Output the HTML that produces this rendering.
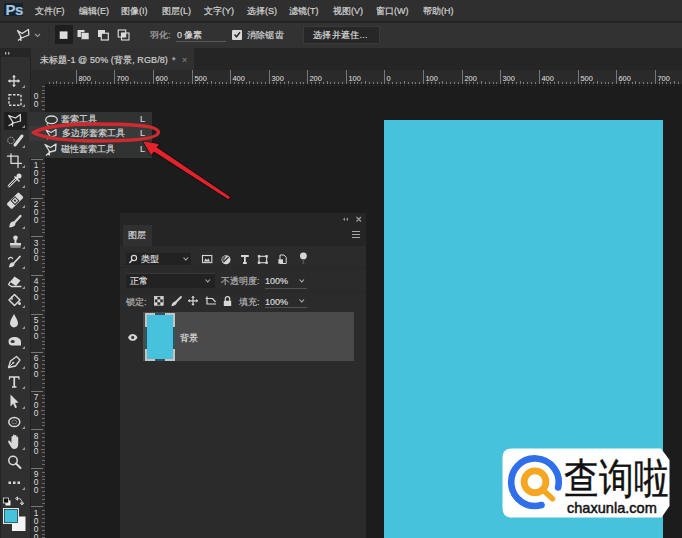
<!DOCTYPE html><html><head><meta charset="utf-8"><style>
*{margin:0;padding:0;box-sizing:border-box}
html,body{width:682px;height:538px;overflow:hidden;background:#1c1c1c;font-family:"Liberation Sans",sans-serif;color:#cfcfcf}
.a{position:absolute;white-space:nowrap;-webkit-text-stroke:0.2px currentColor}
svg{position:absolute;left:0;top:0;overflow:visible}
</style></head><body>
<div class="a" style="left:0px;top:0px;width:682px;height:21px;background:#2f2f2f;"></div>
<div class="a" style="left:0px;top:21px;width:682px;height:2px;background:#232323;"></div>
<div class="a" style="left:0px;top:23px;width:682px;height:25px;background:#323232;"></div>
<div class="a" style="left:0px;top:48px;width:682px;height:22px;background:#252525;"></div>
<div class="a" style="left:31px;top:48px;width:163px;height:22px;background:#303030;"></div>
<div class="a" style="left:0px;top:48px;width:30px;height:490px;background:#303030;"></div>
<div class="a" style="left:0px;top:48px;width:1px;height:490px;background:#242424;"></div>
<div class="a" style="left:0px;top:48px;width:31px;height:9px;background:#262626;"></div>
<div class="a" style="left:30px;top:57px;width:1px;height:481px;background:#222222;"></div>
<div class="a" style="left:31px;top:70px;width:651px;height:14px;background:#2a2a2a;"></div>
<div class="a" style="left:31px;top:70px;width:14px;height:468px;background:#2a2a2a;"></div>
<div class="a" style="left:45px;top:84px;width:637px;height:454px;background:#1c1c1c;"></div>
<svg width="682" height="538"><rect x="76" y="70" width="1" height="14" fill="#777"/><text x="78.5" y="80.6" font-size="7.4" fill="#e0e0e0" font-family="Liberation Sans">800</text><rect x="114" y="70" width="1" height="14" fill="#777"/><text x="116.5" y="80.6" font-size="7.4" fill="#e0e0e0" font-family="Liberation Sans">700</text><rect x="153" y="70" width="1" height="14" fill="#777"/><text x="155.5" y="80.6" font-size="7.4" fill="#e0e0e0" font-family="Liberation Sans">600</text><rect x="192" y="70" width="1" height="14" fill="#777"/><text x="194.5" y="80.6" font-size="7.4" fill="#e0e0e0" font-family="Liberation Sans">500</text><rect x="230" y="70" width="1" height="14" fill="#777"/><text x="232.5" y="80.6" font-size="7.4" fill="#e0e0e0" font-family="Liberation Sans">400</text><rect x="269" y="70" width="1" height="14" fill="#777"/><text x="271.5" y="80.6" font-size="7.4" fill="#e0e0e0" font-family="Liberation Sans">300</text><rect x="307" y="70" width="1" height="14" fill="#777"/><text x="309.5" y="80.6" font-size="7.4" fill="#e0e0e0" font-family="Liberation Sans">200</text><rect x="346" y="70" width="1" height="14" fill="#777"/><text x="348.5" y="80.6" font-size="7.4" fill="#e0e0e0" font-family="Liberation Sans">100</text><rect x="384" y="70" width="1" height="14" fill="#777"/><text x="386.5" y="80.6" font-size="7.4" fill="#e0e0e0" font-family="Liberation Sans">0</text><rect x="423" y="70" width="1" height="14" fill="#777"/><text x="425.5" y="80.6" font-size="7.4" fill="#e0e0e0" font-family="Liberation Sans">100</text><rect x="462" y="70" width="1" height="14" fill="#777"/><text x="464.5" y="80.6" font-size="7.4" fill="#e0e0e0" font-family="Liberation Sans">200</text><rect x="500" y="70" width="1" height="14" fill="#777"/><text x="502.5" y="80.6" font-size="7.4" fill="#e0e0e0" font-family="Liberation Sans">300</text><rect x="539" y="70" width="1" height="14" fill="#777"/><text x="541.5" y="80.6" font-size="7.4" fill="#e0e0e0" font-family="Liberation Sans">400</text><rect x="578" y="70" width="1" height="14" fill="#777"/><text x="580.5" y="80.6" font-size="7.4" fill="#e0e0e0" font-family="Liberation Sans">500</text><rect x="616" y="70" width="1" height="14" fill="#777"/><text x="618.5" y="80.6" font-size="7.4" fill="#e0e0e0" font-family="Liberation Sans">600</text><rect x="655" y="70" width="1" height="14" fill="#777"/><text x="657.5" y="80.6" font-size="7.4" fill="#e0e0e0" font-family="Liberation Sans">700</text><rect x="49" y="82" width="1" height="2" fill="#7a7a7a"/><rect x="49" y="85" width="1" height="1" fill="#3a3a3a"/><rect x="53" y="82" width="1" height="2" fill="#7a7a7a"/><rect x="53" y="85" width="1" height="1" fill="#3a3a3a"/><rect x="56" y="81" width="1" height="3" fill="#7a7a7a"/><rect x="56" y="85" width="1" height="1" fill="#3a3a3a"/><rect x="60" y="82" width="1" height="2" fill="#7a7a7a"/><rect x="60" y="85" width="1" height="1" fill="#3a3a3a"/><rect x="64" y="82" width="1" height="2" fill="#7a7a7a"/><rect x="64" y="85" width="1" height="1" fill="#3a3a3a"/><rect x="68" y="82" width="1" height="2" fill="#7a7a7a"/><rect x="68" y="85" width="1" height="1" fill="#3a3a3a"/><rect x="72" y="82" width="1" height="2" fill="#7a7a7a"/><rect x="72" y="85" width="1" height="1" fill="#3a3a3a"/><rect x="80" y="82" width="1" height="2" fill="#7a7a7a"/><rect x="80" y="85" width="1" height="1" fill="#3a3a3a"/><rect x="83" y="82" width="1" height="2" fill="#7a7a7a"/><rect x="83" y="85" width="1" height="1" fill="#3a3a3a"/><rect x="87" y="82" width="1" height="2" fill="#7a7a7a"/><rect x="87" y="85" width="1" height="1" fill="#3a3a3a"/><rect x="91" y="82" width="1" height="2" fill="#7a7a7a"/><rect x="91" y="85" width="1" height="1" fill="#3a3a3a"/><rect x="95" y="81" width="1" height="3" fill="#7a7a7a"/><rect x="95" y="85" width="1" height="1" fill="#3a3a3a"/><rect x="99" y="82" width="1" height="2" fill="#7a7a7a"/><rect x="99" y="85" width="1" height="1" fill="#3a3a3a"/><rect x="103" y="82" width="1" height="2" fill="#7a7a7a"/><rect x="103" y="85" width="1" height="1" fill="#3a3a3a"/><rect x="107" y="82" width="1" height="2" fill="#7a7a7a"/><rect x="107" y="85" width="1" height="1" fill="#3a3a3a"/><rect x="110" y="82" width="1" height="2" fill="#7a7a7a"/><rect x="110" y="85" width="1" height="1" fill="#3a3a3a"/><rect x="118" y="82" width="1" height="2" fill="#7a7a7a"/><rect x="118" y="85" width="1" height="1" fill="#3a3a3a"/><rect x="122" y="82" width="1" height="2" fill="#7a7a7a"/><rect x="122" y="85" width="1" height="1" fill="#3a3a3a"/><rect x="126" y="82" width="1" height="2" fill="#7a7a7a"/><rect x="126" y="85" width="1" height="1" fill="#3a3a3a"/><rect x="130" y="82" width="1" height="2" fill="#7a7a7a"/><rect x="130" y="85" width="1" height="1" fill="#3a3a3a"/><rect x="134" y="81" width="1" height="3" fill="#7a7a7a"/><rect x="134" y="85" width="1" height="1" fill="#3a3a3a"/><rect x="137" y="82" width="1" height="2" fill="#7a7a7a"/><rect x="137" y="85" width="1" height="1" fill="#3a3a3a"/><rect x="141" y="82" width="1" height="2" fill="#7a7a7a"/><rect x="141" y="85" width="1" height="1" fill="#3a3a3a"/><rect x="145" y="82" width="1" height="2" fill="#7a7a7a"/><rect x="145" y="85" width="1" height="1" fill="#3a3a3a"/><rect x="149" y="82" width="1" height="2" fill="#7a7a7a"/><rect x="149" y="85" width="1" height="1" fill="#3a3a3a"/><rect x="157" y="82" width="1" height="2" fill="#7a7a7a"/><rect x="157" y="85" width="1" height="1" fill="#3a3a3a"/><rect x="161" y="82" width="1" height="2" fill="#7a7a7a"/><rect x="161" y="85" width="1" height="1" fill="#3a3a3a"/><rect x="164" y="82" width="1" height="2" fill="#7a7a7a"/><rect x="164" y="85" width="1" height="1" fill="#3a3a3a"/><rect x="168" y="82" width="1" height="2" fill="#7a7a7a"/><rect x="168" y="85" width="1" height="1" fill="#3a3a3a"/><rect x="172" y="81" width="1" height="3" fill="#7a7a7a"/><rect x="172" y="85" width="1" height="1" fill="#3a3a3a"/><rect x="176" y="82" width="1" height="2" fill="#7a7a7a"/><rect x="176" y="85" width="1" height="1" fill="#3a3a3a"/><rect x="180" y="82" width="1" height="2" fill="#7a7a7a"/><rect x="180" y="85" width="1" height="1" fill="#3a3a3a"/><rect x="184" y="82" width="1" height="2" fill="#7a7a7a"/><rect x="184" y="85" width="1" height="1" fill="#3a3a3a"/><rect x="188" y="82" width="1" height="2" fill="#7a7a7a"/><rect x="188" y="85" width="1" height="1" fill="#3a3a3a"/><rect x="195" y="82" width="1" height="2" fill="#7a7a7a"/><rect x="195" y="85" width="1" height="1" fill="#3a3a3a"/><rect x="199" y="82" width="1" height="2" fill="#7a7a7a"/><rect x="199" y="85" width="1" height="1" fill="#3a3a3a"/><rect x="203" y="82" width="1" height="2" fill="#7a7a7a"/><rect x="203" y="85" width="1" height="1" fill="#3a3a3a"/><rect x="207" y="82" width="1" height="2" fill="#7a7a7a"/><rect x="207" y="85" width="1" height="1" fill="#3a3a3a"/><rect x="211" y="81" width="1" height="3" fill="#7a7a7a"/><rect x="211" y="85" width="1" height="1" fill="#3a3a3a"/><rect x="215" y="82" width="1" height="2" fill="#7a7a7a"/><rect x="215" y="85" width="1" height="1" fill="#3a3a3a"/><rect x="219" y="82" width="1" height="2" fill="#7a7a7a"/><rect x="219" y="85" width="1" height="1" fill="#3a3a3a"/><rect x="222" y="82" width="1" height="2" fill="#7a7a7a"/><rect x="222" y="85" width="1" height="1" fill="#3a3a3a"/><rect x="226" y="82" width="1" height="2" fill="#7a7a7a"/><rect x="226" y="85" width="1" height="1" fill="#3a3a3a"/><rect x="234" y="82" width="1" height="2" fill="#7a7a7a"/><rect x="234" y="85" width="1" height="1" fill="#3a3a3a"/><rect x="238" y="82" width="1" height="2" fill="#7a7a7a"/><rect x="238" y="85" width="1" height="1" fill="#3a3a3a"/><rect x="242" y="82" width="1" height="2" fill="#7a7a7a"/><rect x="242" y="85" width="1" height="1" fill="#3a3a3a"/><rect x="246" y="82" width="1" height="2" fill="#7a7a7a"/><rect x="246" y="85" width="1" height="1" fill="#3a3a3a"/><rect x="249" y="81" width="1" height="3" fill="#7a7a7a"/><rect x="249" y="85" width="1" height="1" fill="#3a3a3a"/><rect x="253" y="82" width="1" height="2" fill="#7a7a7a"/><rect x="253" y="85" width="1" height="1" fill="#3a3a3a"/><rect x="257" y="82" width="1" height="2" fill="#7a7a7a"/><rect x="257" y="85" width="1" height="1" fill="#3a3a3a"/><rect x="261" y="82" width="1" height="2" fill="#7a7a7a"/><rect x="261" y="85" width="1" height="1" fill="#3a3a3a"/><rect x="265" y="82" width="1" height="2" fill="#7a7a7a"/><rect x="265" y="85" width="1" height="1" fill="#3a3a3a"/><rect x="273" y="82" width="1" height="2" fill="#7a7a7a"/><rect x="273" y="85" width="1" height="1" fill="#3a3a3a"/><rect x="276" y="82" width="1" height="2" fill="#7a7a7a"/><rect x="276" y="85" width="1" height="1" fill="#3a3a3a"/><rect x="280" y="82" width="1" height="2" fill="#7a7a7a"/><rect x="280" y="85" width="1" height="1" fill="#3a3a3a"/><rect x="284" y="82" width="1" height="2" fill="#7a7a7a"/><rect x="284" y="85" width="1" height="1" fill="#3a3a3a"/><rect x="288" y="81" width="1" height="3" fill="#7a7a7a"/><rect x="288" y="85" width="1" height="1" fill="#3a3a3a"/><rect x="292" y="82" width="1" height="2" fill="#7a7a7a"/><rect x="292" y="85" width="1" height="1" fill="#3a3a3a"/><rect x="296" y="82" width="1" height="2" fill="#7a7a7a"/><rect x="296" y="85" width="1" height="1" fill="#3a3a3a"/><rect x="300" y="82" width="1" height="2" fill="#7a7a7a"/><rect x="300" y="85" width="1" height="1" fill="#3a3a3a"/><rect x="303" y="82" width="1" height="2" fill="#7a7a7a"/><rect x="303" y="85" width="1" height="1" fill="#3a3a3a"/><rect x="311" y="82" width="1" height="2" fill="#7a7a7a"/><rect x="311" y="85" width="1" height="1" fill="#3a3a3a"/><rect x="315" y="82" width="1" height="2" fill="#7a7a7a"/><rect x="315" y="85" width="1" height="1" fill="#3a3a3a"/><rect x="319" y="82" width="1" height="2" fill="#7a7a7a"/><rect x="319" y="85" width="1" height="1" fill="#3a3a3a"/><rect x="323" y="82" width="1" height="2" fill="#7a7a7a"/><rect x="323" y="85" width="1" height="1" fill="#3a3a3a"/><rect x="327" y="81" width="1" height="3" fill="#7a7a7a"/><rect x="327" y="85" width="1" height="1" fill="#3a3a3a"/><rect x="330" y="82" width="1" height="2" fill="#7a7a7a"/><rect x="330" y="85" width="1" height="1" fill="#3a3a3a"/><rect x="334" y="82" width="1" height="2" fill="#7a7a7a"/><rect x="334" y="85" width="1" height="1" fill="#3a3a3a"/><rect x="338" y="82" width="1" height="2" fill="#7a7a7a"/><rect x="338" y="85" width="1" height="1" fill="#3a3a3a"/><rect x="342" y="82" width="1" height="2" fill="#7a7a7a"/><rect x="342" y="85" width="1" height="1" fill="#3a3a3a"/><rect x="350" y="82" width="1" height="2" fill="#7a7a7a"/><rect x="350" y="85" width="1" height="1" fill="#3a3a3a"/><rect x="354" y="82" width="1" height="2" fill="#7a7a7a"/><rect x="354" y="85" width="1" height="1" fill="#3a3a3a"/><rect x="357" y="82" width="1" height="2" fill="#7a7a7a"/><rect x="357" y="85" width="1" height="1" fill="#3a3a3a"/><rect x="361" y="82" width="1" height="2" fill="#7a7a7a"/><rect x="361" y="85" width="1" height="1" fill="#3a3a3a"/><rect x="365" y="81" width="1" height="3" fill="#7a7a7a"/><rect x="365" y="85" width="1" height="1" fill="#3a3a3a"/><rect x="369" y="82" width="1" height="2" fill="#7a7a7a"/><rect x="369" y="85" width="1" height="1" fill="#3a3a3a"/><rect x="373" y="82" width="1" height="2" fill="#7a7a7a"/><rect x="373" y="85" width="1" height="1" fill="#3a3a3a"/><rect x="377" y="82" width="1" height="2" fill="#7a7a7a"/><rect x="377" y="85" width="1" height="1" fill="#3a3a3a"/><rect x="381" y="82" width="1" height="2" fill="#7a7a7a"/><rect x="381" y="85" width="1" height="1" fill="#3a3a3a"/><rect x="388" y="82" width="1" height="2" fill="#7a7a7a"/><rect x="388" y="85" width="1" height="1" fill="#3a3a3a"/><rect x="392" y="82" width="1" height="2" fill="#7a7a7a"/><rect x="392" y="85" width="1" height="1" fill="#3a3a3a"/><rect x="396" y="82" width="1" height="2" fill="#7a7a7a"/><rect x="396" y="85" width="1" height="1" fill="#3a3a3a"/><rect x="400" y="82" width="1" height="2" fill="#7a7a7a"/><rect x="400" y="85" width="1" height="1" fill="#3a3a3a"/><rect x="404" y="81" width="1" height="3" fill="#7a7a7a"/><rect x="404" y="85" width="1" height="1" fill="#3a3a3a"/><rect x="408" y="82" width="1" height="2" fill="#7a7a7a"/><rect x="408" y="85" width="1" height="1" fill="#3a3a3a"/><rect x="412" y="82" width="1" height="2" fill="#7a7a7a"/><rect x="412" y="85" width="1" height="1" fill="#3a3a3a"/><rect x="415" y="82" width="1" height="2" fill="#7a7a7a"/><rect x="415" y="85" width="1" height="1" fill="#3a3a3a"/><rect x="419" y="82" width="1" height="2" fill="#7a7a7a"/><rect x="419" y="85" width="1" height="1" fill="#3a3a3a"/><rect x="427" y="82" width="1" height="2" fill="#7a7a7a"/><rect x="427" y="85" width="1" height="1" fill="#3a3a3a"/><rect x="431" y="82" width="1" height="2" fill="#7a7a7a"/><rect x="431" y="85" width="1" height="1" fill="#3a3a3a"/><rect x="435" y="82" width="1" height="2" fill="#7a7a7a"/><rect x="435" y="85" width="1" height="1" fill="#3a3a3a"/><rect x="439" y="82" width="1" height="2" fill="#7a7a7a"/><rect x="439" y="85" width="1" height="1" fill="#3a3a3a"/><rect x="442" y="81" width="1" height="3" fill="#7a7a7a"/><rect x="442" y="85" width="1" height="1" fill="#3a3a3a"/><rect x="446" y="82" width="1" height="2" fill="#7a7a7a"/><rect x="446" y="85" width="1" height="1" fill="#3a3a3a"/><rect x="450" y="82" width="1" height="2" fill="#7a7a7a"/><rect x="450" y="85" width="1" height="1" fill="#3a3a3a"/><rect x="454" y="82" width="1" height="2" fill="#7a7a7a"/><rect x="454" y="85" width="1" height="1" fill="#3a3a3a"/><rect x="458" y="82" width="1" height="2" fill="#7a7a7a"/><rect x="458" y="85" width="1" height="1" fill="#3a3a3a"/><rect x="466" y="82" width="1" height="2" fill="#7a7a7a"/><rect x="466" y="85" width="1" height="1" fill="#3a3a3a"/><rect x="469" y="82" width="1" height="2" fill="#7a7a7a"/><rect x="469" y="85" width="1" height="1" fill="#3a3a3a"/><rect x="473" y="82" width="1" height="2" fill="#7a7a7a"/><rect x="473" y="85" width="1" height="1" fill="#3a3a3a"/><rect x="477" y="82" width="1" height="2" fill="#7a7a7a"/><rect x="477" y="85" width="1" height="1" fill="#3a3a3a"/><rect x="481" y="81" width="1" height="3" fill="#7a7a7a"/><rect x="481" y="85" width="1" height="1" fill="#3a3a3a"/><rect x="485" y="82" width="1" height="2" fill="#7a7a7a"/><rect x="485" y="85" width="1" height="1" fill="#3a3a3a"/><rect x="489" y="82" width="1" height="2" fill="#7a7a7a"/><rect x="489" y="85" width="1" height="1" fill="#3a3a3a"/><rect x="493" y="82" width="1" height="2" fill="#7a7a7a"/><rect x="493" y="85" width="1" height="1" fill="#3a3a3a"/><rect x="496" y="82" width="1" height="2" fill="#7a7a7a"/><rect x="496" y="85" width="1" height="1" fill="#3a3a3a"/><rect x="504" y="82" width="1" height="2" fill="#7a7a7a"/><rect x="504" y="85" width="1" height="1" fill="#3a3a3a"/><rect x="508" y="82" width="1" height="2" fill="#7a7a7a"/><rect x="508" y="85" width="1" height="1" fill="#3a3a3a"/><rect x="512" y="82" width="1" height="2" fill="#7a7a7a"/><rect x="512" y="85" width="1" height="1" fill="#3a3a3a"/><rect x="516" y="82" width="1" height="2" fill="#7a7a7a"/><rect x="516" y="85" width="1" height="1" fill="#3a3a3a"/><rect x="520" y="81" width="1" height="3" fill="#7a7a7a"/><rect x="520" y="85" width="1" height="1" fill="#3a3a3a"/><rect x="523" y="82" width="1" height="2" fill="#7a7a7a"/><rect x="523" y="85" width="1" height="1" fill="#3a3a3a"/><rect x="527" y="82" width="1" height="2" fill="#7a7a7a"/><rect x="527" y="85" width="1" height="1" fill="#3a3a3a"/><rect x="531" y="82" width="1" height="2" fill="#7a7a7a"/><rect x="531" y="85" width="1" height="1" fill="#3a3a3a"/><rect x="535" y="82" width="1" height="2" fill="#7a7a7a"/><rect x="535" y="85" width="1" height="1" fill="#3a3a3a"/><rect x="543" y="82" width="1" height="2" fill="#7a7a7a"/><rect x="543" y="85" width="1" height="1" fill="#3a3a3a"/><rect x="547" y="82" width="1" height="2" fill="#7a7a7a"/><rect x="547" y="85" width="1" height="1" fill="#3a3a3a"/><rect x="550" y="82" width="1" height="2" fill="#7a7a7a"/><rect x="550" y="85" width="1" height="1" fill="#3a3a3a"/><rect x="554" y="82" width="1" height="2" fill="#7a7a7a"/><rect x="554" y="85" width="1" height="1" fill="#3a3a3a"/><rect x="558" y="81" width="1" height="3" fill="#7a7a7a"/><rect x="558" y="85" width="1" height="1" fill="#3a3a3a"/><rect x="562" y="82" width="1" height="2" fill="#7a7a7a"/><rect x="562" y="85" width="1" height="1" fill="#3a3a3a"/><rect x="566" y="82" width="1" height="2" fill="#7a7a7a"/><rect x="566" y="85" width="1" height="1" fill="#3a3a3a"/><rect x="570" y="82" width="1" height="2" fill="#7a7a7a"/><rect x="570" y="85" width="1" height="1" fill="#3a3a3a"/><rect x="574" y="82" width="1" height="2" fill="#7a7a7a"/><rect x="574" y="85" width="1" height="1" fill="#3a3a3a"/><rect x="581" y="82" width="1" height="2" fill="#7a7a7a"/><rect x="581" y="85" width="1" height="1" fill="#3a3a3a"/><rect x="585" y="82" width="1" height="2" fill="#7a7a7a"/><rect x="585" y="85" width="1" height="1" fill="#3a3a3a"/><rect x="589" y="82" width="1" height="2" fill="#7a7a7a"/><rect x="589" y="85" width="1" height="1" fill="#3a3a3a"/><rect x="593" y="82" width="1" height="2" fill="#7a7a7a"/><rect x="593" y="85" width="1" height="1" fill="#3a3a3a"/><rect x="597" y="81" width="1" height="3" fill="#7a7a7a"/><rect x="597" y="85" width="1" height="1" fill="#3a3a3a"/><rect x="601" y="82" width="1" height="2" fill="#7a7a7a"/><rect x="601" y="85" width="1" height="1" fill="#3a3a3a"/><rect x="605" y="82" width="1" height="2" fill="#7a7a7a"/><rect x="605" y="85" width="1" height="1" fill="#3a3a3a"/><rect x="608" y="82" width="1" height="2" fill="#7a7a7a"/><rect x="608" y="85" width="1" height="1" fill="#3a3a3a"/><rect x="612" y="82" width="1" height="2" fill="#7a7a7a"/><rect x="612" y="85" width="1" height="1" fill="#3a3a3a"/><rect x="620" y="82" width="1" height="2" fill="#7a7a7a"/><rect x="620" y="85" width="1" height="1" fill="#3a3a3a"/><rect x="624" y="82" width="1" height="2" fill="#7a7a7a"/><rect x="624" y="85" width="1" height="1" fill="#3a3a3a"/><rect x="628" y="82" width="1" height="2" fill="#7a7a7a"/><rect x="628" y="85" width="1" height="1" fill="#3a3a3a"/><rect x="632" y="82" width="1" height="2" fill="#7a7a7a"/><rect x="632" y="85" width="1" height="1" fill="#3a3a3a"/><rect x="635" y="81" width="1" height="3" fill="#7a7a7a"/><rect x="635" y="85" width="1" height="1" fill="#3a3a3a"/><rect x="639" y="82" width="1" height="2" fill="#7a7a7a"/><rect x="639" y="85" width="1" height="1" fill="#3a3a3a"/><rect x="643" y="82" width="1" height="2" fill="#7a7a7a"/><rect x="643" y="85" width="1" height="1" fill="#3a3a3a"/><rect x="647" y="82" width="1" height="2" fill="#7a7a7a"/><rect x="647" y="85" width="1" height="1" fill="#3a3a3a"/><rect x="651" y="82" width="1" height="2" fill="#7a7a7a"/><rect x="651" y="85" width="1" height="1" fill="#3a3a3a"/><rect x="659" y="82" width="1" height="2" fill="#7a7a7a"/><rect x="659" y="85" width="1" height="1" fill="#3a3a3a"/><rect x="662" y="82" width="1" height="2" fill="#7a7a7a"/><rect x="662" y="85" width="1" height="1" fill="#3a3a3a"/><rect x="666" y="82" width="1" height="2" fill="#7a7a7a"/><rect x="666" y="85" width="1" height="1" fill="#3a3a3a"/><rect x="670" y="82" width="1" height="2" fill="#7a7a7a"/><rect x="670" y="85" width="1" height="1" fill="#3a3a3a"/><rect x="674" y="81" width="1" height="3" fill="#7a7a7a"/><rect x="674" y="85" width="1" height="1" fill="#3a3a3a"/><rect x="678" y="82" width="1" height="2" fill="#7a7a7a"/><rect x="678" y="85" width="1" height="1" fill="#3a3a3a"/><rect x="682" y="82" width="1" height="2" fill="#7a7a7a"/><rect x="682" y="85" width="1" height="1" fill="#3a3a3a"/><rect x="31" y="82" width="12" height="1" fill="#777"/><text x="33.8" y="99.1" font-size="8.4" fill="#dcdcdc" font-family="Liberation Sans">0</text><text x="33.8" y="107.0" font-size="8.4" fill="#dcdcdc" font-family="Liberation Sans">0</text><rect x="31" y="120" width="12" height="1" fill="#777"/><text x="33.8" y="129.8" font-size="8.4" fill="#dcdcdc" font-family="Liberation Sans">0</text><rect x="31" y="159" width="12" height="1" fill="#777"/><text x="33.8" y="168.4" font-size="8.4" fill="#dcdcdc" font-family="Liberation Sans">1</text><text x="33.8" y="176.3" font-size="8.4" fill="#dcdcdc" font-family="Liberation Sans">0</text><text x="33.8" y="184.2" font-size="8.4" fill="#dcdcdc" font-family="Liberation Sans">0</text><rect x="31" y="198" width="12" height="1" fill="#777"/><text x="33.8" y="207.0" font-size="8.4" fill="#dcdcdc" font-family="Liberation Sans">2</text><text x="33.8" y="214.9" font-size="8.4" fill="#dcdcdc" font-family="Liberation Sans">0</text><text x="33.8" y="222.8" font-size="8.4" fill="#dcdcdc" font-family="Liberation Sans">0</text><rect x="31" y="236" width="12" height="1" fill="#777"/><text x="33.8" y="245.6" font-size="8.4" fill="#dcdcdc" font-family="Liberation Sans">3</text><text x="33.8" y="253.5" font-size="8.4" fill="#dcdcdc" font-family="Liberation Sans">0</text><text x="33.8" y="261.4" font-size="8.4" fill="#dcdcdc" font-family="Liberation Sans">0</text><rect x="31" y="275" width="12" height="1" fill="#777"/><text x="33.8" y="284.2" font-size="8.4" fill="#dcdcdc" font-family="Liberation Sans">4</text><text x="33.8" y="292.1" font-size="8.4" fill="#dcdcdc" font-family="Liberation Sans">0</text><text x="33.8" y="300.0" font-size="8.4" fill="#dcdcdc" font-family="Liberation Sans">0</text><rect x="31" y="314" width="12" height="1" fill="#777"/><text x="33.8" y="322.8" font-size="8.4" fill="#dcdcdc" font-family="Liberation Sans">5</text><text x="33.8" y="330.7" font-size="8.4" fill="#dcdcdc" font-family="Liberation Sans">0</text><text x="33.8" y="338.6" font-size="8.4" fill="#dcdcdc" font-family="Liberation Sans">0</text><rect x="31" y="352" width="12" height="1" fill="#777"/><text x="33.8" y="361.4" font-size="8.4" fill="#dcdcdc" font-family="Liberation Sans">6</text><text x="33.8" y="369.3" font-size="8.4" fill="#dcdcdc" font-family="Liberation Sans">0</text><text x="33.8" y="377.2" font-size="8.4" fill="#dcdcdc" font-family="Liberation Sans">0</text><rect x="31" y="391" width="12" height="1" fill="#777"/><text x="33.8" y="400.0" font-size="8.4" fill="#dcdcdc" font-family="Liberation Sans">7</text><text x="33.8" y="407.9" font-size="8.4" fill="#dcdcdc" font-family="Liberation Sans">0</text><text x="33.8" y="415.8" font-size="8.4" fill="#dcdcdc" font-family="Liberation Sans">0</text><rect x="31" y="429" width="12" height="1" fill="#777"/><text x="33.8" y="438.6" font-size="8.4" fill="#dcdcdc" font-family="Liberation Sans">8</text><text x="33.8" y="446.5" font-size="8.4" fill="#dcdcdc" font-family="Liberation Sans">0</text><text x="33.8" y="454.4" font-size="8.4" fill="#dcdcdc" font-family="Liberation Sans">0</text><rect x="31" y="468" width="12" height="1" fill="#777"/><text x="33.8" y="477.2" font-size="8.4" fill="#dcdcdc" font-family="Liberation Sans">9</text><text x="33.8" y="485.1" font-size="8.4" fill="#dcdcdc" font-family="Liberation Sans">0</text><text x="33.8" y="493.0" font-size="8.4" fill="#dcdcdc" font-family="Liberation Sans">0</text><rect x="31" y="506" width="12" height="1" fill="#777"/><text x="33.8" y="515.8" font-size="8.4" fill="#dcdcdc" font-family="Liberation Sans">1</text><text x="33.8" y="523.7" font-size="8.4" fill="#dcdcdc" font-family="Liberation Sans">0</text><text x="33.8" y="531.6" font-size="8.4" fill="#dcdcdc" font-family="Liberation Sans">0</text><text x="33.8" y="539.5" font-size="8.4" fill="#dcdcdc" font-family="Liberation Sans">0</text><rect x="42" y="86" width="3" height="1" fill="#6a6a6a"/><rect x="42" y="90" width="3" height="1" fill="#6a6a6a"/><rect x="42" y="93" width="3" height="1" fill="#6a6a6a"/><rect x="42" y="97" width="3" height="1" fill="#6a6a6a"/><rect x="41" y="101" width="4" height="1" fill="#6a6a6a"/><rect x="42" y="105" width="3" height="1" fill="#6a6a6a"/><rect x="42" y="109" width="3" height="1" fill="#6a6a6a"/><rect x="42" y="113" width="3" height="1" fill="#6a6a6a"/><rect x="42" y="117" width="3" height="1" fill="#6a6a6a"/><rect x="42" y="124" width="3" height="1" fill="#6a6a6a"/><rect x="42" y="128" width="3" height="1" fill="#6a6a6a"/><rect x="42" y="132" width="3" height="1" fill="#6a6a6a"/><rect x="42" y="136" width="3" height="1" fill="#6a6a6a"/><rect x="41" y="140" width="4" height="1" fill="#6a6a6a"/><rect x="42" y="144" width="3" height="1" fill="#6a6a6a"/><rect x="42" y="148" width="3" height="1" fill="#6a6a6a"/><rect x="42" y="151" width="3" height="1" fill="#6a6a6a"/><rect x="42" y="155" width="3" height="1" fill="#6a6a6a"/><rect x="42" y="163" width="3" height="1" fill="#6a6a6a"/><rect x="42" y="167" width="3" height="1" fill="#6a6a6a"/><rect x="42" y="171" width="3" height="1" fill="#6a6a6a"/><rect x="42" y="175" width="3" height="1" fill="#6a6a6a"/><rect x="41" y="178" width="4" height="1" fill="#6a6a6a"/><rect x="42" y="182" width="3" height="1" fill="#6a6a6a"/><rect x="42" y="186" width="3" height="1" fill="#6a6a6a"/><rect x="42" y="190" width="3" height="1" fill="#6a6a6a"/><rect x="42" y="194" width="3" height="1" fill="#6a6a6a"/><rect x="42" y="202" width="3" height="1" fill="#6a6a6a"/><rect x="42" y="205" width="3" height="1" fill="#6a6a6a"/><rect x="42" y="209" width="3" height="1" fill="#6a6a6a"/><rect x="42" y="213" width="3" height="1" fill="#6a6a6a"/><rect x="41" y="217" width="4" height="1" fill="#6a6a6a"/><rect x="42" y="221" width="3" height="1" fill="#6a6a6a"/><rect x="42" y="225" width="3" height="1" fill="#6a6a6a"/><rect x="42" y="229" width="3" height="1" fill="#6a6a6a"/><rect x="42" y="232" width="3" height="1" fill="#6a6a6a"/><rect x="42" y="240" width="3" height="1" fill="#6a6a6a"/><rect x="42" y="244" width="3" height="1" fill="#6a6a6a"/><rect x="42" y="248" width="3" height="1" fill="#6a6a6a"/><rect x="42" y="252" width="3" height="1" fill="#6a6a6a"/><rect x="41" y="256" width="4" height="1" fill="#6a6a6a"/><rect x="42" y="259" width="3" height="1" fill="#6a6a6a"/><rect x="42" y="263" width="3" height="1" fill="#6a6a6a"/><rect x="42" y="267" width="3" height="1" fill="#6a6a6a"/><rect x="42" y="271" width="3" height="1" fill="#6a6a6a"/><rect x="42" y="279" width="3" height="1" fill="#6a6a6a"/><rect x="42" y="283" width="3" height="1" fill="#6a6a6a"/><rect x="42" y="286" width="3" height="1" fill="#6a6a6a"/><rect x="42" y="290" width="3" height="1" fill="#6a6a6a"/><rect x="41" y="294" width="4" height="1" fill="#6a6a6a"/><rect x="42" y="298" width="3" height="1" fill="#6a6a6a"/><rect x="42" y="302" width="3" height="1" fill="#6a6a6a"/><rect x="42" y="306" width="3" height="1" fill="#6a6a6a"/><rect x="42" y="310" width="3" height="1" fill="#6a6a6a"/><rect x="42" y="317" width="3" height="1" fill="#6a6a6a"/><rect x="42" y="321" width="3" height="1" fill="#6a6a6a"/><rect x="42" y="325" width="3" height="1" fill="#6a6a6a"/><rect x="42" y="329" width="3" height="1" fill="#6a6a6a"/><rect x="41" y="333" width="4" height="1" fill="#6a6a6a"/><rect x="42" y="337" width="3" height="1" fill="#6a6a6a"/><rect x="42" y="341" width="3" height="1" fill="#6a6a6a"/><rect x="42" y="344" width="3" height="1" fill="#6a6a6a"/><rect x="42" y="348" width="3" height="1" fill="#6a6a6a"/><rect x="42" y="356" width="3" height="1" fill="#6a6a6a"/><rect x="42" y="360" width="3" height="1" fill="#6a6a6a"/><rect x="42" y="364" width="3" height="1" fill="#6a6a6a"/><rect x="42" y="368" width="3" height="1" fill="#6a6a6a"/><rect x="41" y="371" width="4" height="1" fill="#6a6a6a"/><rect x="42" y="375" width="3" height="1" fill="#6a6a6a"/><rect x="42" y="379" width="3" height="1" fill="#6a6a6a"/><rect x="42" y="383" width="3" height="1" fill="#6a6a6a"/><rect x="42" y="387" width="3" height="1" fill="#6a6a6a"/><rect x="42" y="395" width="3" height="1" fill="#6a6a6a"/><rect x="42" y="398" width="3" height="1" fill="#6a6a6a"/><rect x="42" y="402" width="3" height="1" fill="#6a6a6a"/><rect x="42" y="406" width="3" height="1" fill="#6a6a6a"/><rect x="41" y="410" width="4" height="1" fill="#6a6a6a"/><rect x="42" y="414" width="3" height="1" fill="#6a6a6a"/><rect x="42" y="418" width="3" height="1" fill="#6a6a6a"/><rect x="42" y="422" width="3" height="1" fill="#6a6a6a"/><rect x="42" y="425" width="3" height="1" fill="#6a6a6a"/><rect x="42" y="433" width="3" height="1" fill="#6a6a6a"/><rect x="42" y="437" width="3" height="1" fill="#6a6a6a"/><rect x="42" y="441" width="3" height="1" fill="#6a6a6a"/><rect x="42" y="445" width="3" height="1" fill="#6a6a6a"/><rect x="41" y="449" width="4" height="1" fill="#6a6a6a"/><rect x="42" y="452" width="3" height="1" fill="#6a6a6a"/><rect x="42" y="456" width="3" height="1" fill="#6a6a6a"/><rect x="42" y="460" width="3" height="1" fill="#6a6a6a"/><rect x="42" y="464" width="3" height="1" fill="#6a6a6a"/><rect x="42" y="472" width="3" height="1" fill="#6a6a6a"/><rect x="42" y="476" width="3" height="1" fill="#6a6a6a"/><rect x="42" y="479" width="3" height="1" fill="#6a6a6a"/><rect x="42" y="483" width="3" height="1" fill="#6a6a6a"/><rect x="41" y="487" width="4" height="1" fill="#6a6a6a"/><rect x="42" y="491" width="3" height="1" fill="#6a6a6a"/><rect x="42" y="495" width="3" height="1" fill="#6a6a6a"/><rect x="42" y="499" width="3" height="1" fill="#6a6a6a"/><rect x="42" y="503" width="3" height="1" fill="#6a6a6a"/><rect x="42" y="510" width="3" height="1" fill="#6a6a6a"/><rect x="42" y="514" width="3" height="1" fill="#6a6a6a"/><rect x="42" y="518" width="3" height="1" fill="#6a6a6a"/><rect x="42" y="522" width="3" height="1" fill="#6a6a6a"/><rect x="41" y="526" width="4" height="1" fill="#6a6a6a"/><rect x="42" y="530" width="3" height="1" fill="#6a6a6a"/><rect x="42" y="534" width="3" height="1" fill="#6a6a6a"/><rect x="42" y="537" width="3" height="1" fill="#6a6a6a"/></svg>
<div class="a" style="left:31px;top:70px;width:14px;height:14px;background:#2a2a2a;"></div>
<div class="a" style="left:0px;top:48px;width:31px;height:9px;background:#262626;"></div>
<div class="a" style="left:384px;top:120px;width:279px;height:418px;background:#47c2dc;"></div>
<div class="a" style="left:4px;top:3px;width:19px;height:13px;background:#142232;"></div>
<div class="a" style="left:5.5px;top:2px;font-size:15px;line-height:15px;font-weight:bold;color:#a2c2dc;letter-spacing:-0.5px">Ps</div>
<div class="a" style="left:35px;top:7px;font-size:9px;line-height:9px;color:#d4d4d4;">文件(F)</div>
<div class="a" style="left:79px;top:7px;font-size:9px;line-height:9px;color:#d4d4d4;">编辑(E)</div>
<div class="a" style="left:121px;top:7px;font-size:9px;line-height:9px;color:#d4d4d4;">图像(I)</div>
<div class="a" style="left:162px;top:7px;font-size:9px;line-height:9px;color:#d4d4d4;">图层(L)</div>
<div class="a" style="left:204px;top:7px;font-size:9px;line-height:9px;color:#d4d4d4;">文字(Y)</div>
<div class="a" style="left:247px;top:7px;font-size:9px;line-height:9px;color:#d4d4d4;">选择(S)</div>
<div class="a" style="left:289px;top:7px;font-size:9px;line-height:9px;color:#d4d4d4;">滤镜(T)</div>
<div class="a" style="left:333px;top:7px;font-size:9px;line-height:9px;color:#d4d4d4;">视图(V)</div>
<div class="a" style="left:376px;top:7px;font-size:9px;line-height:9px;color:#d4d4d4;">窗口(W)</div>
<div class="a" style="left:423px;top:7px;font-size:9px;line-height:9px;color:#d4d4d4;">帮助(H)</div>
<div class="a" style="left:48px;top:24px;width:1px;height:23px;background:#2e2e2e;"></div>
<div class="a" style="left:55px;top:25px;width:18px;height:19px;background:#1e1e1e;"></div>
<div class="a" style="left:150px;top:31px;font-size:9px;line-height:9px;color:#a8a8a8;">羽化:</div>
<div class="a" style="left:177px;top:31px;font-size:9px;line-height:9px;color:#dadada;letter-spacing:-0.3px">0 像素</div>
<div class="a" style="left:176px;top:41px;width:50px;height:1px;background:#5a5a5a;"></div>
<div class="a" style="left:232px;top:30px;width:10px;height:10px;background:#d8d8d8;border-radius:1px"></div>
<div class="a" style="left:247px;top:31px;font-size:9px;line-height:9px;color:#cfcfcf;letter-spacing:0.2px">消除锯齿</div>
<div class="a" style="left:303px;top:26px;width:77px;height:18px;background:#272727;border:1px solid #3a3a3a"></div>
<div class="a" style="left:313px;top:31px;font-size:9px;line-height:9px;color:#d8d8d8;letter-spacing:0.3px">选择并遮住...</div>
<svg width="682" height="538"><path d="M17.5,30.5 L22,33.5 L28.5,29.5 L28.8,35 L21.5,38 Z M21.5,38 L18,40.5 M20.5,37 L21,41" fill="none" stroke="#dcdcdc" stroke-width="1.3" stroke-linejoin="round"/><path d="M35,34 L37.5,36.5 L40,34" fill="none" stroke="#9a9a9a" stroke-width="1.1"/><rect x="59.7" y="31.4" width="7.8" height="7.5" fill="#dcdcdc"/><rect x="77.5" y="30" width="7" height="7" fill="#dcdcdc"/><rect x="81.2" y="32.6" width="7.8" height="7" fill="#dcdcdc" stroke="#323232" stroke-width="0.6"/><rect x="98" y="30" width="7" height="7" fill="#dcdcdc"/><rect x="101.3" y="33.2" width="7" height="6.8" fill="#323232" stroke="#dcdcdc" stroke-width="1.2"/><rect x="118.2" y="30" width="7.5" height="7" fill="none" stroke="#dcdcdc" stroke-width="1.1"/><rect x="121.5" y="33" width="7.5" height="7" fill="none" stroke="#dcdcdc" stroke-width="1.1"/><rect x="121.5" y="33" width="4.2" height="4" fill="#dcdcdc"/><path d="M234.5,34.5 L236.5,36.8 L240,32.3" fill="none" stroke="#2a2a2a" stroke-width="1.5"/></svg>
<div class="a" style="left:40px;top:56px;font-size:9px;line-height:9px;color:#d0d0d0;letter-spacing:0.1px">未标题-1 @ 50% (背景, RGB/8)</div>
<div class="a" style="left:172px;top:56px;font-size:9px;line-height:9px;color:#b0b0b0;">*</div>
<div class="a" style="left:182px;top:56px;font-size:9px;line-height:9px;color:#7a7a7a;">×</div>
<div class="a" style="left:120px;top:213px;width:246px;height:325px;background:#2b2b2b;"></div>
<div class="a" style="left:120px;top:213px;width:246px;height:33px;background:#252525;"></div>
<div class="a" style="left:123px;top:225px;width:29px;height:21px;background:#303030;"></div>
<div class="a" style="left:128px;top:231px;font-size:9px;line-height:9px;color:#d4d4d4;">图层</div>
<div class="a" style="left:126px;top:252px;width:65px;height:13px;background:#222222;border-top:1px solid #2a2a2a"></div>
<div class="a" style="left:141px;top:255px;font-size:9px;line-height:9px;color:#d8d8d8;">类型</div>
<div class="a" style="left:126px;top:273px;width:89px;height:15px;background:#222222;border-top:1px solid #383838"></div>
<div class="a" style="left:130px;top:277px;font-size:9px;line-height:9px;color:#dddddd;">正常</div>
<div class="a" style="left:221px;top:277px;font-size:9px;line-height:9px;color:#b0b0b0;">不透明度:</div>
<div class="a" style="left:265px;top:277px;font-size:9px;line-height:9px;color:#d8d8d8;">100%</div>
<div class="a" style="left:265px;top:288px;width:42px;height:1px;background:#505050;"></div>
<div class="a" style="left:126px;top:298px;font-size:9px;line-height:9px;color:#b0b0b0;">锁定:</div>
<div class="a" style="left:239px;top:298px;font-size:9px;line-height:9px;color:#b0b0b0;">填充:</div>
<div class="a" style="left:265px;top:298px;font-size:9px;line-height:9px;color:#d8d8d8;">100%</div>
<div class="a" style="left:265px;top:307px;width:42px;height:1px;background:#505050;"></div>
<div class="a" style="left:120px;top:267px;width:246px;height:1px;background:#272727;"></div>
<div class="a" style="left:120px;top:291px;width:246px;height:1px;background:#272727;"></div>
<div class="a" style="left:143px;top:312px;width:211px;height:49px;background:#4a4a4a;"></div>
<div class="a" style="left:145px;top:313px;width:30px;height:48px;background:#c4c4c4;"></div>
<div class="a" style="left:147px;top:315px;width:26px;height:44px;background:#47c2dc;"></div>
<div class="a" style="left:145px;top:327px;width:2px;height:22px;background:#2f5560;"></div>
<div class="a" style="left:173px;top:327px;width:2px;height:22px;background:#2f5560;"></div>
<div class="a" style="left:155px;top:313px;width:10px;height:2px;background:#2f5560;"></div>
<div class="a" style="left:155px;top:359px;width:10px;height:2px;background:#2f5560;"></div>
<div class="a" style="left:180px;top:334px;font-size:9px;line-height:9px;color:#dcdcdc;">背景</div>
<div class="a" style="left:4px;top:112px;width:23px;height:18px;background:#1f1f1f;"></div>
<svg width="682" height="538"><path d="M14,76 V86 M9,81 H19" fill="none" stroke="#d9d9d9" stroke-width="1.3" stroke-linecap="round" stroke-linejoin="round"/><path d="M14,75 l-2,2.3 h4z M14,87 l-2,-2.3 h4z M8,81 l2.3,-2 v4z M20,81 l-2.3,-2 v4z" fill="#d9d9d9"/><path d="M25,85 L25,88 L22,88 Z" fill="#9a9a9a"/><rect x="9" y="94.8" width="12" height="10.5" fill="none" stroke="#d9d9d9" stroke-width="1.4" stroke-dasharray="2.5,1.5"/><path d="M25,104 L25,107 L22,107 Z" fill="#9a9a9a"/><path d="M8.7,115.6 L15.5,118 L20.3,114.5 L20.5,121 L13.5,123 Z M13.5,123 L9,125.5 M12.5,122 L12.5,126" fill="none" stroke="#d9d9d9" stroke-width="1.3" stroke-linecap="round" stroke-linejoin="round"/><path d="M25,125 L25,128 L22,128 Z" fill="#9a9a9a"/><circle cx="10.9" cy="140.4" r="3.2" fill="none" stroke="#d9d9d9" stroke-width="1" stroke-dasharray="1,1"/><path d="M22,136 L15,145" stroke="#d9d9d9" stroke-width="3" stroke-linecap="round"/><path d="M25,145 L25,148 L22,148 Z" fill="#9a9a9a"/><path d="M11,154 V163.4 H21.5 M7.5,156.2 H18 V167.5" fill="none" stroke="#d9d9d9" stroke-width="1.3" stroke-linecap="round" stroke-linejoin="round" stroke-width="1.6"/><path d="M25,165 L25,168 L22,168 Z" fill="#9a9a9a"/><path d="M9,186 L17,178" stroke="#d9d9d9" stroke-width="2.6" stroke-linecap="round" fill="none"/><path d="M8.7,186.3 L16.5,178.5" stroke="#303030" stroke-width="1" stroke-linecap="round"/><circle cx="19" cy="176" r="2.5" fill="#d9d9d9"/><path d="M14.5,176.5 L19.5,181.5" stroke="#d9d9d9" stroke-width="1.6"/><path d="M25,185 L25,188 L22,188 Z" fill="#9a9a9a"/><rect x="6.5" y="197" width="17" height="7.5" rx="1.5" transform="rotate(-45 15 200.7)" fill="#d9d9d9"/><rect x="12.3" y="198" width="5.4" height="5.4" transform="rotate(-45 15 200.7)" fill="none" stroke="#303030" stroke-width="1"/><rect x="14" y="199.7" width="2" height="2" transform="rotate(-45 15 200.7)" fill="#303030"/><path d="M25,205 L25,208 L22,208 Z" fill="#9a9a9a"/><path d="M20.5,216 L14,223" stroke="#d9d9d9" stroke-width="2.2" stroke-linecap="round"/><path d="M14.3,221.5 C11.5,221 9.3,223 9.3,227.6 C13.5,227.3 16,225.5 15.3,222.8 Z" fill="#d9d9d9"/><path d="M25,226 L25,229 L22,229 Z" fill="#9a9a9a"/><circle cx="15.5" cy="237.8" r="2.3" fill="#d9d9d9"/><rect x="14.5" y="239" width="2" height="4" fill="#d9d9d9"/><rect x="10" y="243" width="11" height="2.6" fill="#d9d9d9"/><rect x="10.5" y="246.3" width="10" height="1.3" fill="#aaa"/><path d="M25,246 L25,249 L22,249 Z" fill="#9a9a9a"/><path d="M20,256.5 L13,264" stroke="#d9d9d9" stroke-width="1.8" stroke-linecap="round"/><path d="M13.3,262.5 C11,262 9,264 9,267.5 C12.5,267 15,266 14.3,264 Z" fill="#d9d9d9"/><path d="M8.5,259 C9.5,257 12,257 12.5,258.5" fill="none" stroke="#d9d9d9" stroke-width="1.3" stroke-linecap="round" stroke-linejoin="round" stroke-width="1"/><path d="M25,266 L25,269 L22,269 Z" fill="#9a9a9a"/><path d="M14.5,276.5 L20.5,280.5 L16,286 L10,282 Z" fill="#d9d9d9"/><path d="M10,282 L8.5,284.5 L11.5,286.5 L21,286.5" fill="none" stroke="#d9d9d9" stroke-width="1.3" stroke-linecap="round" stroke-linejoin="round" stroke-width="1.1"/><path d="M25,286 L25,289 L22,289 Z" fill="#9a9a9a"/><path d="M9,300 L14.5,294.5 L20,300 L14.5,305.5 Z" fill="none" stroke="#d9d9d9" stroke-width="1.5" stroke-linejoin="round"/><path d="M12,296 L12,300" stroke="#d9d9d9" stroke-width="1.2"/><circle cx="19.5" cy="303.5" r="1.5" fill="#d9d9d9"/><path d="M25,305 L25,308 L22,308 Z" fill="#9a9a9a"/><path d="M14,314 C12,318 10,320.5 10,323.3 C10,325.8 12,327.4 14,327.4 C16,327.4 18,325.8 18,323.3 C18,320.5 16,318 14,314 Z" fill="#d9d9d9"/><path d="M25,326 L25,329 L22,329 Z" fill="#9a9a9a"/><path d="M8.5,341.5 C8.5,338.5 11,337 14.5,337 C18,337 21,339 21,342 L21,345.5 L12,345.5 C10,345.5 8.5,344 8.5,341.5 Z" fill="#d9d9d9"/><ellipse cx="12.7" cy="341.5" rx="2" ry="1.5" fill="#303030"/><path d="M25,346 L25,349 L22,349 Z" fill="#9a9a9a"/><path d="M8.5,367.5 L10.5,361 L16.5,356.5 L20,360 L15.5,366 Z" fill="none" stroke="#d9d9d9" stroke-width="1.3" stroke-linejoin="round"/><path d="M8.5,367.5 L13,363" stroke="#d9d9d9" stroke-width="1"/><circle cx="13.3" cy="362.7" r="1" fill="#d9d9d9"/><path d="M25,366 L25,369 L22,369 Z" fill="#9a9a9a"/><path d="M9.5,377 H19 M14.25,377 V387 M12,387 H16.5" fill="none" stroke="#d9d9d9" stroke-width="1.7"/><path d="M9.5,376.5 v3 M19,376.5 v3" stroke="#d9d9d9" stroke-width="1.2"/><path d="M25,386 L25,389 L22,389 Z" fill="#9a9a9a"/><path d="M10.5,394.5 L10.5,406.5 L13.2,403.8 L15.2,408.2 L17,407.3 L15,403 L18.5,402.5 Z" fill="#d9d9d9"/><path d="M25,406 L25,409 L22,409 Z" fill="#9a9a9a"/><ellipse cx="14.3" cy="422" rx="5.5" ry="4.6" fill="none" stroke="#d9d9d9" stroke-width="1.5"/><ellipse cx="14.3" cy="422" rx="2.5" ry="1.8" fill="none" stroke="#888" stroke-width="0.8"/><path d="M25,426 L25,429 L22,429 Z" fill="#9a9a9a"/><path d="M10.5,446 C9,443.5 7.5,441.5 8.5,440.8 C9.5,440 11,442 11.5,443 L11.5,437 C11.5,435.8 13,435.8 13,437 L13,441 L13,435.5 C13,434.3 14.8,434.3 14.8,435.5 L14.8,441 L14.8,436 C14.8,434.8 16.5,434.8 16.5,436 L16.5,441 L16.5,437.5 C16.5,436.3 18.2,436.3 18.2,437.5 L18.2,444.5 C18.2,447.5 16.5,449 14,449 C12.5,449 11.5,448 10.5,446 Z" fill="#d9d9d9"/><path d="M25,447 L25,450 L22,450 Z" fill="#9a9a9a"/><circle cx="13" cy="460.5" r="4.2" fill="none" stroke="#d9d9d9" stroke-width="1.5"/><path d="M16,463.5 L20.5,468" stroke="#d9d9d9" stroke-width="2" stroke-linecap="round"/><rect x="8.5" y="481.5" width="2.5" height="2.5" fill="#d9d9d9"/><rect x="13" y="481.5" width="2.5" height="2.5" fill="#d9d9d9"/><rect x="17.5" y="481.5" width="2.5" height="2.5" fill="#d9d9d9"/><path d="M25,487 L25,490 L22,490 Z" fill="#9a9a9a"/><rect x="5.5" y="500.5" width="5" height="5" fill="#eee"/><rect x="3.5" y="498" width="5" height="5" fill="#111" stroke="#ddd" stroke-width="0.8"/><path d="M17,498.5 C21,498.5 22,500 22,503.5 M15.5,498.5 l2,-1.6 v3.2z M22,505 l-1.6,-2 h3.2z" fill="none" stroke="#d9d9d9" stroke-width="1"/><rect x="12" y="516.5" width="13.5" height="14.5" fill="#f4f4f4"/><rect x="3.5" y="508.5" width="15" height="15" fill="#47c2dc" stroke="#e8e8e8" stroke-width="1"/><rect x="4.5" y="509.5" width="13" height="13" fill="none" stroke="#222" stroke-width="0.6"/><path d="M5,51.5 L7,53.2 L5,55 Z M8,51.5 L10,53.2 L8,55 Z" fill="#aaa"/></svg>
<svg width="682" height="538"><path d="M345,217.5 L343,219.3 L345,221 Z M348,217.5 L346,219.3 L348,221 Z" fill="#9a9a9a"/><path d="M356.5,217 L361,221.5 M361,217 L356.5,221.5" stroke="#9a9a9a" stroke-width="1.3"/><path d="M352,231.5 H360 M352,234.5 H360 M352,237.5 H360" stroke="#a8a8a8" stroke-width="1.2"/><circle cx="134" cy="258" r="2.6" fill="none" stroke="#d6d6d6" stroke-width="1.2"/><path d="M132.2,260 L129.8,262.5" stroke="#d6d6d6" stroke-width="1.5" stroke-linecap="round"/><path d="M183.5,257.5 L185.8,260 L188,257.5" fill="none" stroke="#b0b0b0" stroke-width="1.1"/><path d="M205.5,279.5 L207.8,282 L210,279.5" fill="none" stroke="#b0b0b0" stroke-width="1.1"/><path d="M299.5,279.5 L301.8,282 L304,279.5" fill="none" stroke="#b0b0b0" stroke-width="1.1"/><path d="M299.5,299.5 L301.8,302 L304,299.5" fill="none" stroke="#b0b0b0" stroke-width="1.1"/><rect x="202.5" y="255.5" width="9.3" height="7.1" fill="none" stroke="#d6d6d6" stroke-width="1.1"/><path d="M204,261.5 L205.5,258.5 L207,260 L208.5,258.5 L210,261.5 Z" fill="#d6d6d6"/><circle cx="226" cy="259.7" r="4.5" fill="#d6d6d6"/><path d="M223.5,262 L228.5,257" stroke="#2b2b2b" stroke-width="1.2"/><path d="M222,259.7 A4,4 0 0 1 226,255.7 L223,262.5 Z" fill="#2b2b2b" opacity="0.7"/><path d="M241,256 H248.8 M244.9,256 V263 M243,263 H246.8" fill="none" stroke="#d6d6d6" stroke-width="1.8"/><rect x="259" y="256.3" width="7.6" height="6.4" fill="none" stroke="#d6d6d6" stroke-width="1.1"/><rect x="257.8" y="255.10000000000002" width="2.4" height="2.4" fill="#d6d6d6"/><rect x="265.40000000000003" y="255.10000000000002" width="2.4" height="2.4" fill="#d6d6d6"/><rect x="257.8" y="261.5" width="2.4" height="2.4" fill="#d6d6d6"/><rect x="265.40000000000003" y="261.5" width="2.4" height="2.4" fill="#d6d6d6"/><path d="M280,255 L284,255 L286.2,257.3 L286.2,263.5 L280,263.5 Z" fill="none" stroke="#d6d6d6" stroke-width="1"/><rect x="278.4" y="259.3" width="4.6" height="4.3" fill="#d6d6d6"/><circle cx="303.4" cy="256" r="3.4" fill="#d6d6d6"/><path d="M303.4,259 V264" stroke="#555" stroke-width="1.5"/><rect x="154.5" y="296.5" width="2.9" height="2.9" fill="#d6d6d6"/><rect x="154.5" y="302.3" width="2.9" height="2.9" fill="#d6d6d6"/><rect x="157.4" y="299.4" width="2.9" height="2.9" fill="#d6d6d6"/><rect x="160.3" y="296.5" width="2.9" height="2.9" fill="#d6d6d6"/><rect x="160.3" y="302.3" width="2.9" height="2.9" fill="#d6d6d6"/><rect x="154.5" y="296.5" width="8.7" height="8.7" fill="none" stroke="#d6d6d6" stroke-width="0.8"/><path d="M181,297 L175.5,302.5" stroke="#d6d6d6" stroke-width="1.8" stroke-linecap="round"/><path d="M175.8,301.5 C173.5,301.5 171.8,303.5 171.3,306.3 C174.3,306 176.8,304.8 176.8,302.6 Z" fill="#d6d6d6"/><path d="M193,296.5 V305 M188.5,300.8 H197.5" stroke="#d6d6d6" stroke-width="1.2"/><path d="M193,295.8 l-1.8,2 h3.6z M193,305.8 l-1.8,-2 h3.6z M187.8,300.8 l2,-1.8 v3.6z M198.2,300.8 l-2,-1.8 v3.6z" fill="#d6d6d6"/><path d="M207,296.5 V304 H216 M205.5,298.5 H212.5 L215.5,302" fill="none" stroke="#d6d6d6" stroke-width="1.2"/><path d="M225.3,301 V298.8 A2.2,2.2 0 0 1 229.7,298.8 V301" fill="none" stroke="#d6d6d6" stroke-width="1.2"/><rect x="223.8" y="300.8" width="7.4" height="5.2" rx="0.6" fill="#d6d6d6"/><path d="M128,337.4 C129.5,334.8 131,334 132.7,334 C134.4,334 136,334.8 137.5,337.4 C136,340 134.4,340.8 132.7,340.8 C131,340.8 129.5,340 128,337.4 Z" fill="#d6d6d6"/><circle cx="132.7" cy="337.4" r="1.6" fill="#383838"/></svg>
<div class="a" style="left:29px;top:112px;width:123px;height:46px;background:#313232;"></div>
<div class="a" style="left:29px;top:126px;width:123px;height:15px;background:#383a3a;"></div>
<div class="a" style="left:60.5px;top:115px;font-size:9px;line-height:9px;color:#d0d0d0;">套索工具</div>
<div class="a" style="left:61.5px;top:129px;font-size:9px;line-height:9px;color:#d0d0d0;">多边形套索工具</div>
<div class="a" style="left:61px;top:145px;font-size:9px;line-height:9px;color:#d0d0d0;">磁性套索工具</div>
<svg width="682" height="538"><ellipse cx="51.5" cy="119.8" rx="5.8" ry="3.8" fill="none" stroke="#d9d9d9" stroke-width="1.3"/><path d="M47.5,123 C46.5,124.5 47,125.5 48.5,125.5" fill="none" stroke="#d9d9d9" stroke-width="1"/><path d="M46,130 L51,132.5 L56,129.5 L56,135.5 L50.5,137 Z M50.5,137 L47,139" fill="none" stroke="#d9d9d9" stroke-width="1.2" stroke-linejoin="round"/><path d="M45,144.5 L50.5,147.5 L56,144 L55.5,150.5 L50,152 Z M50,152 L46,155.5 M49,151 L49.5,155.5" fill="none" stroke="#d9d9d9" stroke-width="1.3" stroke-linejoin="round"/></svg>
<div class="a" style="left:140px;top:115px;font-size:9px;line-height:9px;color:#d0d0d0;">L</div>
<div class="a" style="left:140px;top:129px;font-size:9px;line-height:9px;color:#d0d0d0;">L</div>
<div class="a" style="left:140px;top:145px;font-size:9px;line-height:9px;color:#d0d0d0;">L</div>
<svg width="682" height="538"><path d="M512,448.5 L661,448.5 L669.5,460 L669.5,506 L661.5,517.5 L512,517.5 Q502.5,517.5 502.5,508 L502.5,458 Q502.5,448.5 512,448.5 Z" fill="#fff"/></svg>
<div class="a" style="left:564px;top:458px;font-family:'Liberation Serif',serif;font-size:35px;line-height:35px;color:#111;-webkit-text-stroke:0.35px #111;transform:scaleY(1.21);transform-origin:0 0">查询啦</div>
<div class="a" style="left:567px;top:500px;font-size:15px;line-height:15px;color:#111;-webkit-text-stroke:0.5px #111;transform:scaleX(0.97);transform-origin:0 0">chaxunla.com</div>
<svg width="682" height="538"><path d="M558.1,487.5 A23.75,23.75 0 1 0 541.5,505.0" fill="none" stroke="#2f6fea" stroke-width="6.6" stroke-linecap="round"/><circle cx="535" cy="481.8" r="10.9" fill="none" stroke="#f5a623" stroke-width="6.8"/><path d="M543,490 L552.5,498.7" stroke="#f5a623" stroke-width="5.6" stroke-linecap="round"/></svg>
<svg width="682" height="538"><path d="M33,132.6 C48,125 72,124 96,124 C128,124 158,125 158.5,132.2 C158,139.5 128,141 96,141 C72,141 48,140 33,132.6 Z" fill="none" stroke="#cf2a2f" stroke-width="3.3" stroke-linejoin="round"/><path d="M144,142 L158.2,144.5 L156.0,147.5 L229.5,197.2 L228.5,198.8 L153.8,150.9 L151.3,154.4 Z" fill="none" stroke="#000" stroke-opacity="0.35" stroke-width="3" stroke-linejoin="round"/><path d="M144,142 L158.2,144.5 L156.0,147.5 L229.5,197.2 L228.5,198.8 L153.8,150.9 L151.3,154.4 Z" fill="#e8222c" stroke="#e8222c" stroke-width="1" stroke-linejoin="round"/></svg>
</body></html>
